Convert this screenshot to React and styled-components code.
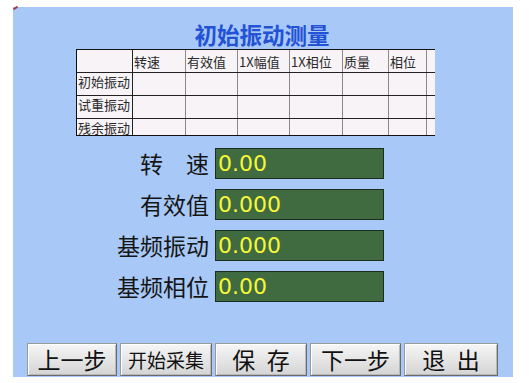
import React from "react";
import styled, { createGlobalStyle } from "styled-components";

const Global = createGlobalStyle`
  html, body { margin: 0; padding: 0; background: #ffffff; }
  body { font-family: "Noto Sans CJK SC", "Noto Sans", sans-serif; }
`;

const Page = styled.div`
  position: relative;
  width: 529px;
  height: 383px;
  padding: 7px 0 0 13px;
  box-sizing: border-box;
`;

const Mark = styled.div`
  position: absolute;
  left: 13px;
  top: 7px;
  width: 5px;
  height: 2px;
  background: #a04050;
  transform: rotate(-35deg);
`;

const Panel = styled.div`
  width: 500px;
  height: 370px;
  background: #a8c9f7;
  display: flex;
  flex-direction: column;
  padding-top: 13px;
  box-sizing: border-box;
`;

const Title = styled.div`
  height: 28px;
  line-height: 28px;
  text-align: center;
  padding-right: 2px;
  font-size: 22.5px;
  font-weight: bold;
  color: #2352d6;
  font-family: "Noto Sans CJK SC", sans-serif;
`;

const GridWrap = styled.div`
  margin: 1px 0 0 63px;
  width: 359px;
  height: 87px;
  overflow: hidden;
  border-top: 1px solid #111;
  border-left: 1px solid #111;
  border-bottom: 1px solid #111;
  box-sizing: border-box;
  background: #f7f3f7;
`;

const GridRow = styled.div`
  display: flex;
  height: 23px;
  border-bottom: 1px solid #222;
  box-sizing: border-box;
`;

const Cell = styled.div`
  flex: none;
  width: ${(p) => p.$w}px;
  height: 100%;
  border-right: 1px solid ${(p) => (p.$dark ? "#222" : "#8a8a8a")};
  box-sizing: border-box;
  font-size: 13px;
  line-height: ${(p) => (p.$head ? "23px" : "17px")};
  color: #2a2a2a;
  padding-left: 1px;
  white-space: nowrap;
  overflow: hidden;
  font-family: "Noto Sans CJK SC", sans-serif;
`;

const Fields = styled.div`
  margin: 12px 0 0 100px;
  display: flex;
  flex-direction: column;
  gap: 10px;
`;

const FieldRow = styled.div`
  display: flex;
  align-items: center;
  gap: 6px;
  height: 31px;
`;

const Label = styled.div`
  width: 96px;
  text-align: right;
  font-size: 23px;
  line-height: 31px;
  color: #151515;
  white-space: pre;
  font-family: "Noto Sans CJK SC", sans-serif;
`;

const Value = styled.div`
  width: 169px;
  height: 31px;
  background: #406b40;
  border: 1px solid #1e2e1e;
  box-sizing: border-box;
  color: #f6f63a;
  font-family: "DejaVu Sans", "Liberation Sans", sans-serif;
  font-size: 22px;
  line-height: 29px;
  padding-left: 2px;
`;

const Buttons = styled.div`
  margin: auto 0 1px 14px;
  display: flex;
  gap: 3px;
`;

const Button = styled.button`
  width: ${(p) => p.$w}px;
  height: 33px;
  padding: 0;
  background: linear-gradient(#f6f6f6, #e2e2e2 60%, #d4d4d4);
  border: 1px solid #6a6a6a;
  border-top-color: #9a9a9a;
  border-left-color: #9a9a9a;
  box-shadow: inset 1px 1px 0 #ffffff, inset -1px -1px 0 #b8b8b8;
  color: #111;
  font-family: "Noto Sans CJK SC", sans-serif;
  font-size: ${(p) => p.$fs}px;
  line-height: 31px;
  white-space: pre;
`;

const cols = [56, 53, 52, 52, 53, 46, 38, 40];
const header = ["", "转速", "有效值", "1X幅值", "1X相位", "质量", "相位", ""];
const rows = ["初始振动", "试重振动", "残余振动"];

const fields = [
  ["转　速", "0.00"],
  ["有效值", "0.000"],
  ["基频振动", "0.000"],
  ["基频相位", "0.00"],
];

const buttons = [
  ["上一步", 90, 23],
  ["开始采集", 92, 19],
  ["保\u2002存", 92, 23],
  ["下一步", 91, 23],
  ["退\u2002出", 94, 23],
];

export default function App() {
  return (
    <>
      <Global />
      <Page>
        <Mark />
        <Panel>
          <Title>初始振动测量</Title>
          <GridWrap>
            <GridRow>
              {header.map((h, i) => (
                <Cell key={i} $w={cols[i]} $dark={i === 0} $head>
                  {h}
                </Cell>
              ))}
            </GridRow>
            {rows.map((r) => (
              <GridRow key={r}>
                {cols.map((w, i) => (
                  <Cell key={i} $w={w} $dark={i === 0}>
                    {i === 0 ? r : ""}
                  </Cell>
                ))}
              </GridRow>
            ))}
          </GridWrap>
          <Fields>
            {fields.map(([l, v]) => (
              <FieldRow key={l}>
                <Label>{l}</Label>
                <Value>{v}</Value>
              </FieldRow>
            ))}
          </Fields>
          <Buttons>
            {buttons.map(([t, w, fs]) => (
              <Button key={t} $w={w} $fs={fs}>
                {t}
              </Button>
            ))}
          </Buttons>
        </Panel>
      </Page>
    </>
  );
}
